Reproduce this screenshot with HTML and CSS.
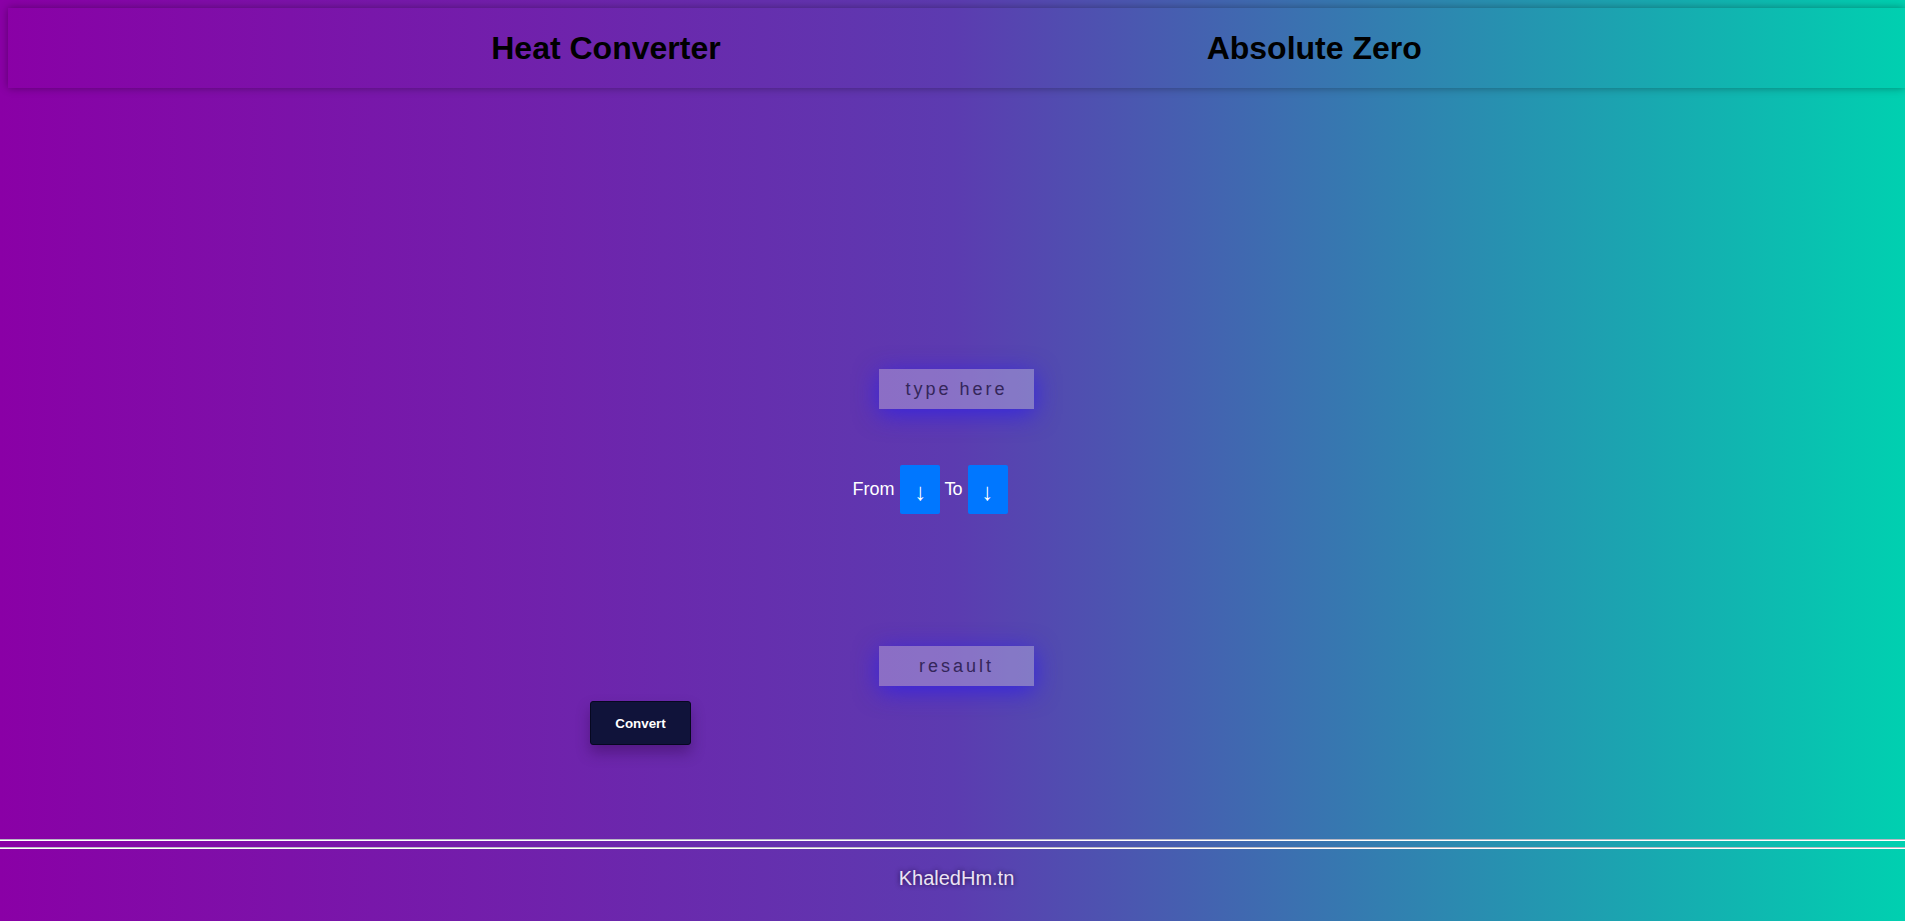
FILE: index.html
```html
<!DOCTYPE html>
<html lang="en">
<head>
<meta charset="utf-8">
<title>Heat Converter</title>
<link rel="stylesheet" href="styles.css">
</head>
<body>
<div class="page">
  <header class="topbar">
    <h1 class="title">Heat Converter</h1>
    <h1 class="title">Absolute Zero</h1>
  </header>
  <main class="main">
    <input class="field field-in" type="text" placeholder="type here">
    <div class="units">
      <span class="label">From</span>
      <button class="pick" type="button">↓</button>
      <span class="label label-to">To</span>
      <button class="pick" type="button">↓</button>
    </div>
    <input class="field field-out" type="text" placeholder="resault">
    <div class="action">
      <button class="convert" type="button">Convert</button>
    </div>
  </main>
  <footer class="footer">
    <div class="rule"></div>
    <div class="rule rule-2"></div>
    <p class="credit">KhaledHm.tn</p>
  </footer>
</div>
</body>
</html>
```

FILE: styles.css
```css
html, body {
  margin: 0;
  padding: 0;
}
body {
  height: 921px;
  overflow: hidden;
  background: linear-gradient(90deg, #8a00a6 0%, #5c3bb0 50%, #00d0b0 100%);
  font-family: "Liberation Sans", Arial, sans-serif;
}
.page {
  margin-left: 8px;
  padding-top: 8px;
  width: calc(100% - 8px);
}
.topbar {
  height: 80px;
  display: flex;
  justify-content: center;
  align-items: center;
  gap: 486px;
  box-shadow: 0 0 8px rgba(0, 0, 0, 0.35);
}
.title {
  margin: 0;
  font-size: 32px;
  font-weight: bold;
  color: #000;
}
.main {
  display: flex;
  flex-direction: column;
  align-items: center;
  padding-top: 281px;
}
.field {
  box-sizing: border-box;
  width: 155px;
  height: 40px;
  border: none;
  outline: none;
  padding: 0;
  background: rgba(255, 255, 255, 0.28);
  box-shadow: 0 5px 24px rgba(45, 30, 235, 0.8);
  text-align: center;
  font-family: "Liberation Sans", Arial, sans-serif;
  font-size: 18px;
  letter-spacing: 3px;
  color: #34265a;
}
.field::placeholder {
  color: #34265a;
  opacity: 1;
}
.units {
  margin-top: 56px;
  display: flex;
  align-items: center;
  align-self: stretch;
  justify-content: center;
  padding-right: 53px;
}
.label {
  color: #fff;
  font-size: 18px;
  margin-right: 6px;
}
.label-to {
  margin-left: 4px;
  letter-spacing: -1px;
}
.pick {
  width: 40px;
  height: 49px;
  border: none;
  border-radius: 2px;
  background: #0077ff;
  color: #fff;
  font-family: "Liberation Sans", Arial, sans-serif;
  font-size: 24px;
  line-height: 1;
  padding: 4px 0 0;
}
.field-out {
  margin-top: 132px;
}
.action {
  align-self: stretch;
  margin-top: 15px;
  padding-left: 582px;
}
.convert {
  box-sizing: border-box;
  width: 101px;
  height: 44px;
  background: #10133a;
  border: 1px solid #060820;
  border-radius: 3px;
  color: #fff;
  font-family: "Liberation Sans", Arial, sans-serif;
  font-weight: bold;
  font-size: 13.33px;
  box-shadow: 0 8px 14px rgba(40, 0, 60, 0.35);
}
.footer {
  margin-top: 94px;
  margin-left: -8px;
}
.rule {
  height: 0;
  border-top: 1px solid #b8b8c4;
  border-bottom: 1px solid #ffffff;
}
.rule-2 {
  margin-top: 6px;
}
.credit {
  margin: 18px 0 0;
  text-align: center;
  padding-left: 8px;
  font-size: 20px;
  color: #ece4f4;
  text-shadow: 0 0 5px rgba(20, 0, 40, 0.8);
}
```
